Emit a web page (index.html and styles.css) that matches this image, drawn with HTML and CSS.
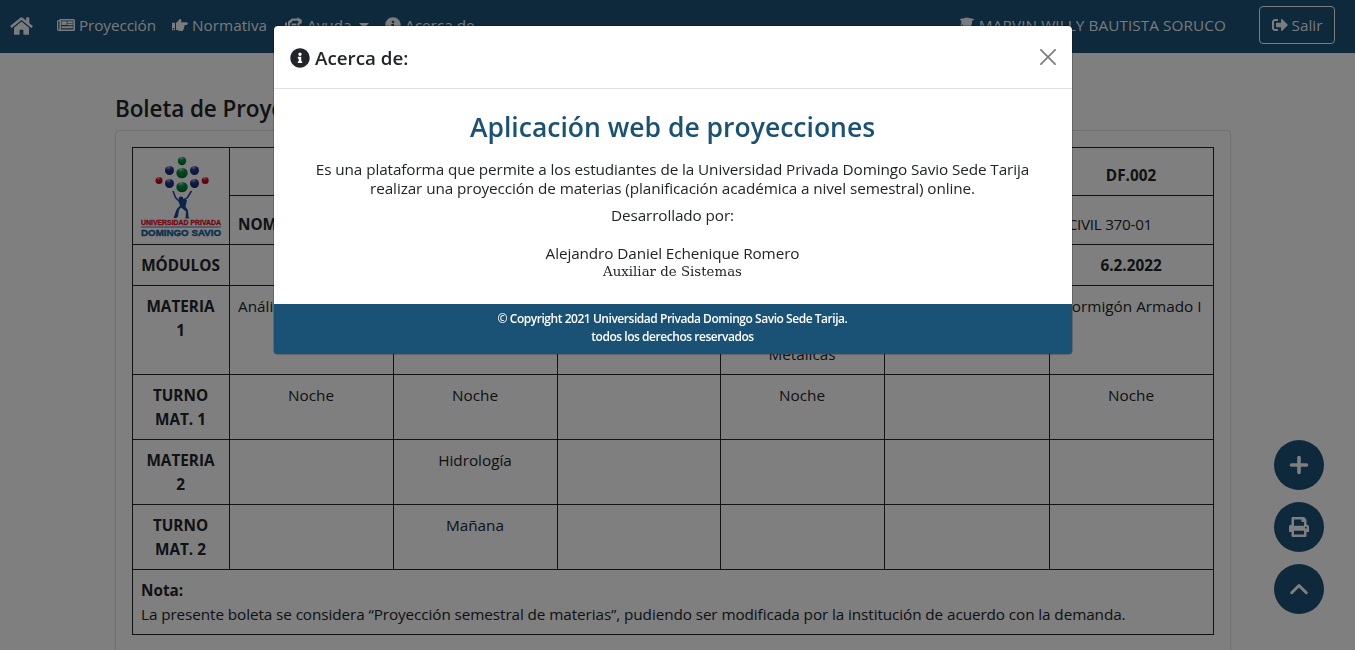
FILE: index.html
```html
<!DOCTYPE html>
<html lang="es">
<head>
<meta charset="utf-8">
<title>Boleta de Proyección</title>
<link rel="stylesheet" href="styles.css">
</head>
<body>
<svg class="defs" width="0" height="0">
  <symbol id="i-info" viewBox="0 0 512 512"><path d="M256 8C119.043 8 8 119.083 8 256c0 136.997 111.043 248 248 248s248-111.003 248-248C504 119.083 392.957 8 256 8zm0 110c23.196 0 42 18.804 42 42s-18.804 42-42 42-42-18.804-42-42 18.804-42 42-42zm56 254c0 6.627-5.373 12-12 12h-88c-6.627 0-12-5.373-12-12v-24c0-6.627 5.373-12 12-12h12v-64h-12c-6.627 0-12-5.373-12-12v-24c0-6.627 5.373-12 12-12h64c6.627 0 12 5.373 12 12v100h12c6.627 0 12 5.373 12 12v24z"/></symbol>
</svg>
<nav class="navbar">
  <a class="brand"><svg viewBox="0 0 576 512" width="23" height="20"><path d="M280.37 148.26L96 300.11V464a16 16 0 0 0 16 16l112.06-.29a16 16 0 0 0 15.92-16V368a16 16 0 0 1 16-16h64a16 16 0 0 1 16 16v95.640a16 16 0 0 0 16 16.050L464 480a16 16 0 0 0 16-16V300L295.670 148.260a12.190 12.190 0 0 0-15.300 0zM571.600 251.470L488 182.560V44.050a12 12 0 0 0-12-12h-56a12 12 0 0 0-12 12v72.610L318.470 43a48 48 0 0 0-61 0L4.340 251.470a12 12 0 0 0-1.600 16.900l25.500 31A12 12 0 0 0 45.150 301l235.220-193.740a12.190 12.190 0 0 1 15.300 0L530.900 301a12 12 0 0 0 16.900-1.600l25.500-31a12 12 0 0 0-1.700-16.930z"/></svg></a>
  <a class="link proy"><svg viewBox="0 0 18 16" width="18" height="16"><path fill-rule="evenodd" d="M3.500 2h13A1.500 1.500 0 0 1 18 3.500v9a1.500 1.500 0 0 1-1.500 1.500h-14.500A2 2 0 0 1 0 12V4.500A1.500 1.500 0 0 1 1.500 3H2.200A1.500 1.500 0 0 1 3.500 2zM1.300 4.500V12a.6.6 0 0 0 1.200 0V4.200H1.800zM4 3.600v8.800h12.400V3.600zM4.500 4.200h5.200v3.700H4.500zM10.400 4.200h5.400v2h-5.400zM10.400 6.800h5.400v1.500h-5.400zM4.500 9.200h11.300v2H4.500z"/></svg>Proyección</a>
  <a class="link norm"><svg viewBox="0 0 16 16" width="16" height="16"><path fill-rule="evenodd" d="M0 5.800h3v7.400H0zM1.500 10.900a.8.8 0 1 0 .01 0zM4 5.700C5.800 5.300 6.500 3 7.800 2.100c1.300-.2 1.900.8 1.400 2.300l-.3.800h5.500a1.400 1.400 0 0 1 0 2.800h-2.200c.8.700.6 1.900-.2 2.300.4.900 0 1.800-.7 2.100.1 1-.6 1.700-1.700 1.700H8.300c-1.800 0-2.600-1.200-4.300-1.300z"/></svg>Normativa</a>
  <a class="link ayuda"><svg viewBox="0 0 18 16" width="18" height="16"><path fill-rule="evenodd" d="M0 6l2-1v9H0zM3 4.500L7 1.500h5.500V.2L17 3l-.5 3.500-2 .5v6.500H3zM5 6.500V12h7.500V6.500L14 4.800l-1.500-1H8zM6.500 6.500h5v2H6.500z"/></svg>Ayuda<i class="caret"></i></a>
  <a class="link acerca"><svg width="16" height="16"><use href="#i-info"/></svg>Acerca de</a>
  <a class="link user"><svg viewBox="0 0 14 16" width="14" height="16"><path d="M0 2l7-1.500L14 2v1l-2 .7v2.300a5 4.800 0 0 1-10 0v-2L1.700 3.500v3.200l.5 2H.5l.4-2V3.200L0 3zM3.500 11L7 14l3.500-3c2 .3 3.500 1.800 3.500 5H0c0-3.200 1.500-4.700 3.500-5z"/></svg>MARVIN WILLY BAUTISTA SORUCO</a>
  <a class="salir"><svg viewBox="0 0 512 512" width="16" height="16"><path d="M497 273L329 441c-15 15-41 4.500-41-17v-96H152c-13.300 0-24-10.700-24-24v-96c0-13.300 10.700-24 24-24h136V88c0-21.400 25.900-32 41-17l168 168c9.300 9.400 9.300 24.600 0 34zM192 436v-40c0-6.600-5.400-12-12-12H96c-17.700 0-32-14.300-32-32V160c0-17.700 14.300-32 32-32h84c6.600 0 12-5.400 12-12V76c0-6.600-5.400-12-12-12H96c-53 0-96 43-96 96v192c0 53 43 96 96 96h84c6.600 0 12-5.400 12-12z"/></svg>Salir</a>
</nav>

<main class="page">
  <h4 class="title">Boleta de Proyección</h4>
  <section class="card">
    <table class="boleta">
      <colgroup><col class="c0"><col class="c1"><col class="c1"><col class="c2"><col class="c1"><col class="c3"><col class="c1"></colgroup>
      <tr class="r48 low"><td class="logo" rowspan="2">
        <svg viewBox="0 0 82 84" width="82" height="84">
          <defs>
            <radialGradient id="g" cx=".4" cy=".1" r=".9"><stop offset="0" stop-color="#9fdcb4"/><stop offset=".4" stop-color="#0a8f45"/><stop offset="1" stop-color="#006b30"/></radialGradient>
            <radialGradient id="b" cx=".4" cy=".1" r=".9"><stop offset="0" stop-color="#a9aee0"/><stop offset=".4" stop-color="#27348f"/><stop offset="1" stop-color="#1b2570"/></radialGradient>
            <radialGradient id="r" cx=".4" cy=".1" r=".9"><stop offset="0" stop-color="#ffa0a8"/><stop offset=".4" stop-color="#d8101e"/><stop offset="1" stop-color="#b00010"/></radialGradient>
          </defs>
          <g fill="url(#g)"><circle cx="41" cy="5" r="4.200"/><ellipse cx="41" cy="17" rx="5.700" ry="5.300"/><ellipse cx="41" cy="31" rx="5.700" ry="5.300"/></g>
          <g fill="url(#b)"><circle cx="28.500" cy="14.500" r="4.500"/><circle cx="53.500" cy="14.500" r="4.500"/><circle cx="28.500" cy="27.500" r="4.500"/><circle cx="53.500" cy="27.500" r="4.500"/></g>
          <g fill="url(#r)"><circle cx="18" cy="24.500" r="3.500"/><circle cx="64.200" cy="24.500" r="3.500"/></g>
          <circle cx="40" cy="42.800" r="2.300" fill="#1d3f8f"/>
          <path d="M32 35l2.500 6.500 4 4M50.500 35l-4 6.500-5.500 4" fill="none" stroke="#27409a" stroke-width="1.500"/>
          <path fill="#1d4a96" d="M37 44l7-1.500 2 2-1.500 6 2.500 4 .5 6.500 1 1.500h-4l.5-7-5-4-2 2.500-1 6.500-1.500 1.500h-3l3-8.500 3.500-4z"/>
          <text class="l1" x="0" y="69" textLength="80" lengthAdjust="spacingAndGlyphs">UNIVERSIDAD PRIVADA</text>
          <path d="M0 71h80" stroke="#16619d" stroke-width=".8"/>
          <text class="l2" x="0" y="80" textLength="80" lengthAdjust="spacingAndGlyphs">DOMINGO SAVIO</text>
        </svg></td><th colspan="5"></th><th>DF.002</th></tr>
      <tr class="r49 low"><th class="left" colspan="3">NOMBRE:</th><td class="right" colspan="3">INGENIERÍA CIVIL 370-01</td></tr>
      <tr class="r41"><th>MÓDULOS</th><th></th><th></th><th></th><th></th><th></th><th>6.2.2022</th></tr>
      <tr class="r89"><th>MATERIA<br>1</th><td class="left">Análisis</td><td></td><td></td><td><br><br>Metálicas</td><td></td><td>Hormigón Armado I</td></tr>
      <tr class="r65"><th>TURNO<br>MAT. 1</th><td>Noche</td><td>Noche</td><td></td><td>Noche</td><td></td><td>Noche</td></tr>
      <tr class="r65"><th>MATERIA<br>2</th><td></td><td>Hidrología</td><td></td><td></td><td></td><td></td></tr>
      <tr class="r65"><th>TURNO<br>MAT. 2</th><td></td><td>Mañana</td><td></td><td></td><td></td><td></td></tr>
      <tr class="r65"><td class="left" colspan="7"><b>Nota:</b><br><span class="note">La presente boleta se considera “Proyección semestral de materias”, pudiendo ser modificada por la institución de acuerdo con la demanda.</span></td></tr>
    </table>
  </section>
</main>

<div class="fabs">
  <a class="fab"><svg viewBox="0 0 20 20" width="20" height="20"><path d="M10 2.500v15M2.500 10h15" class="stroke w4"/></svg></a>
  <a class="fab"><svg viewBox="0 0 512 512" width="20" height="20"><path d="M448 192V77.250c0-8.490-3.370-16.620-9.370-22.630L393.370 9.370c-6-6-14.140-9.370-22.630-9.370H96C78.330 0 64 14.330 64 32v160c-35.350 0-64 28.650-64 64v112c0 8.840 7.160 16 16 16h48v96c0 17.670 14.330 32 32 32h320c17.670 0 32-14.330 32-32v-96h48c8.840 0 16-7.160 16-16V256c0-35.350-28.650-64-64-64zm-64 256H128v-96h256v96zm0-224H128V64h192v48c0 8.840 7.160 16 16 16h48v96zm48 72c-13.250 0-24-10.750-24-24 0-13.260 10.750-24 24-24s24 10.740 24 24c0 13.250-10.750 24-24 24z"/></svg></a>
  <a class="fab"><svg viewBox="0 0 20 20" width="20" height="20"><path d="M2.700 13.700L10 6.500l7.300 7.200" class="stroke w3"/></svg></a>
</div>

<div class="backdrop"></div>
<div class="modal">
  <header class="m-head">
    <h5><svg width="20" height="20"><use href="#i-info"/></svg><span>Acerca de:</span></h5>
    <svg class="close" viewBox="0 0 16 16" width="16" height="16"><path d="M.9.9l14.200 14.200M15.100.9L.9 15.100"/></svg>
  </header>
  <div class="m-body">
    <h3>Aplicación web de proyecciones</h3>
    <p class="p1">Es una plataforma que permite a los estudiantes de la Universidad Privada Domingo Savio Sede Tarija<br>realizar una proyección de materias (planificación académica a nivel semestral) online.</p>
    <p class="p2">Desarrollado por:</p>
    <p class="p3">Alejandro Daniel Echenique Romero</p>
    <p class="p4">Auxiliar de Sistemas</p>
  </div>
  <footer class="m-foot">© Copyright 2021 Universidad Privada Domingo Savio Sede Tarija.<br>todos los derechos reservados</footer>
</div>
</body>
</html>
```
FILE: styles.css
```css
* { box-sizing: border-box; }
html { overflow: hidden; }
body { margin: 0; height: 650px; overflow: hidden; background: #fff; color: #212529; font: 15.3px/24px "Open Sans", "Noto Sans", sans-serif; }
.defs { position: absolute; }
svg { fill: currentColor; flex: none; }
h3, h4, h5, p { margin: 0; }
.navbar { display: flex; align-items: center; height: 53px; padding: 0 20px 3px 10px; background: #1a5276; color: rgba(255,255,255,.95); }
.link { display: flex; align-items: center; gap: 4px; white-space: nowrap; }
.brand { display: flex; margin-right: 24px; padding-top: 2px; }
.proy { width: 115px; letter-spacing: -.1px; }
.norm { width: 113px; }
.ayuda { width: 100px; gap: 4px; }
.acerca { gap: 4px; }
.caret { border: 5px solid transparent; border-top-color: currentColor; border-bottom: 0; margin-left: 3px; }
.user { margin-left: auto; margin-right: 33px; gap: 5px; letter-spacing: .08px; }
.salir { display: flex; align-items: center; justify-content: center; gap: 4px; width: 76px; height: 38px; border: 1px solid #f8f9fa; border-radius: 4px; }
.page { width: 1116px; height: 556px; overflow: hidden; margin: 41px 0 0 115px; }
.title { font-size: 22.500px; font-weight: 600; line-height: 29px; margin-bottom: 7px; letter-spacing: -.1px; }
.card { height: 600px; padding: 16px; border: 1px solid rgba(0,0,0,.125); border-radius: 4px; }
.boleta { width: 1082px; table-layout: fixed; border-collapse: collapse; }
.boleta td, .boleta th { border: 1px solid #212529; padding: 8px 9px 8px 8px; text-align: center; vertical-align: top; }
.c0 { width: 97px; } .c1 { width: 164px; } .c2 { width: 163px; } .c3 { width: 165px; }
.r48 { height: 48px; } .r49 { height: 49px; } .r41 { height: 41px; } .r89 { height: 89px; } .r65 { height: 65px; }
.boleta .low > * { vertical-align: bottom; }
.boleta .left { text-align: left; }
.boleta .right { text-align: right; padding-right: 61px; letter-spacing: -.3px; }
.boleta .logo { vertical-align: top; padding: 8px 7px 0 8px; line-height: 0; }
.note { letter-spacing: -.095px; }
.l1 { font: bold 6.800px "Liberation Sans", sans-serif; fill: #e01020; stroke: #e01020; stroke-width: .3px; }
.l2 { font: bold 9px "Liberation Sans", sans-serif; fill: #16619d; stroke: #16619d; stroke-width: .4px; }
.fabs { position: fixed; right: 31px; top: 440px; display: grid; gap: 12px; }
.fab { display: grid; place-items: center; width: 50px; height: 50px; border-radius: 50%; background: #1a5276; color: #fff; }
.stroke { stroke: currentColor; fill: none; stroke-linecap: round; stroke-linejoin: round; }
.w4 { stroke-width: 3.6; } .w3 { stroke-width: 3; }
.backdrop { position: fixed; inset: 0; background: rgba(0,0,0,.5); }
.modal { position: fixed; left: 273px; top: 25px; width: 800px; height: 330px; display: flex; flex-direction: column; background: #fff; background-clip: padding-box; border: 1px solid rgba(0,0,0,.2); border-radius: 5px; text-align: center; }
.m-head { height: 63px; display: flex; align-items: center; justify-content: space-between; padding: 0 16px; border-bottom: 1px solid #dee2e6; }
.m-head h5 { display: flex; align-items: center; gap: 5px; font-size: 18.800px; font-weight: 600; line-height: 24px; padding-top: 2px; }
.close { stroke: #7f7f7f; stroke-width: 1.8; stroke-linecap: round; }
.m-body { flex: 1; padding-top: 21px; padding-right: 1px; }
.m-body h3 { color: #1a5276; font-size: 26.500px; font-weight: 600; line-height: 34px; margin-bottom: 16px; }
.m-body p { line-height: 19px; white-space: nowrap; letter-spacing: -.1px; }
.m-body .p2 { margin-top: 8px; }
.m-body .p3 { margin-top: 19px; }
.m-body .p4 { font: 13.300px/17px "DejaVu Serif", serif; letter-spacing: .03px; }
.m-foot { height: 50px; padding: 6px 1px 0 0; background: #1a5276; color: #fff; font-size: 12px; line-height: 18px; font-weight: 600; letter-spacing: -.46px; border-radius: 0 0 2px 2px; }
```
